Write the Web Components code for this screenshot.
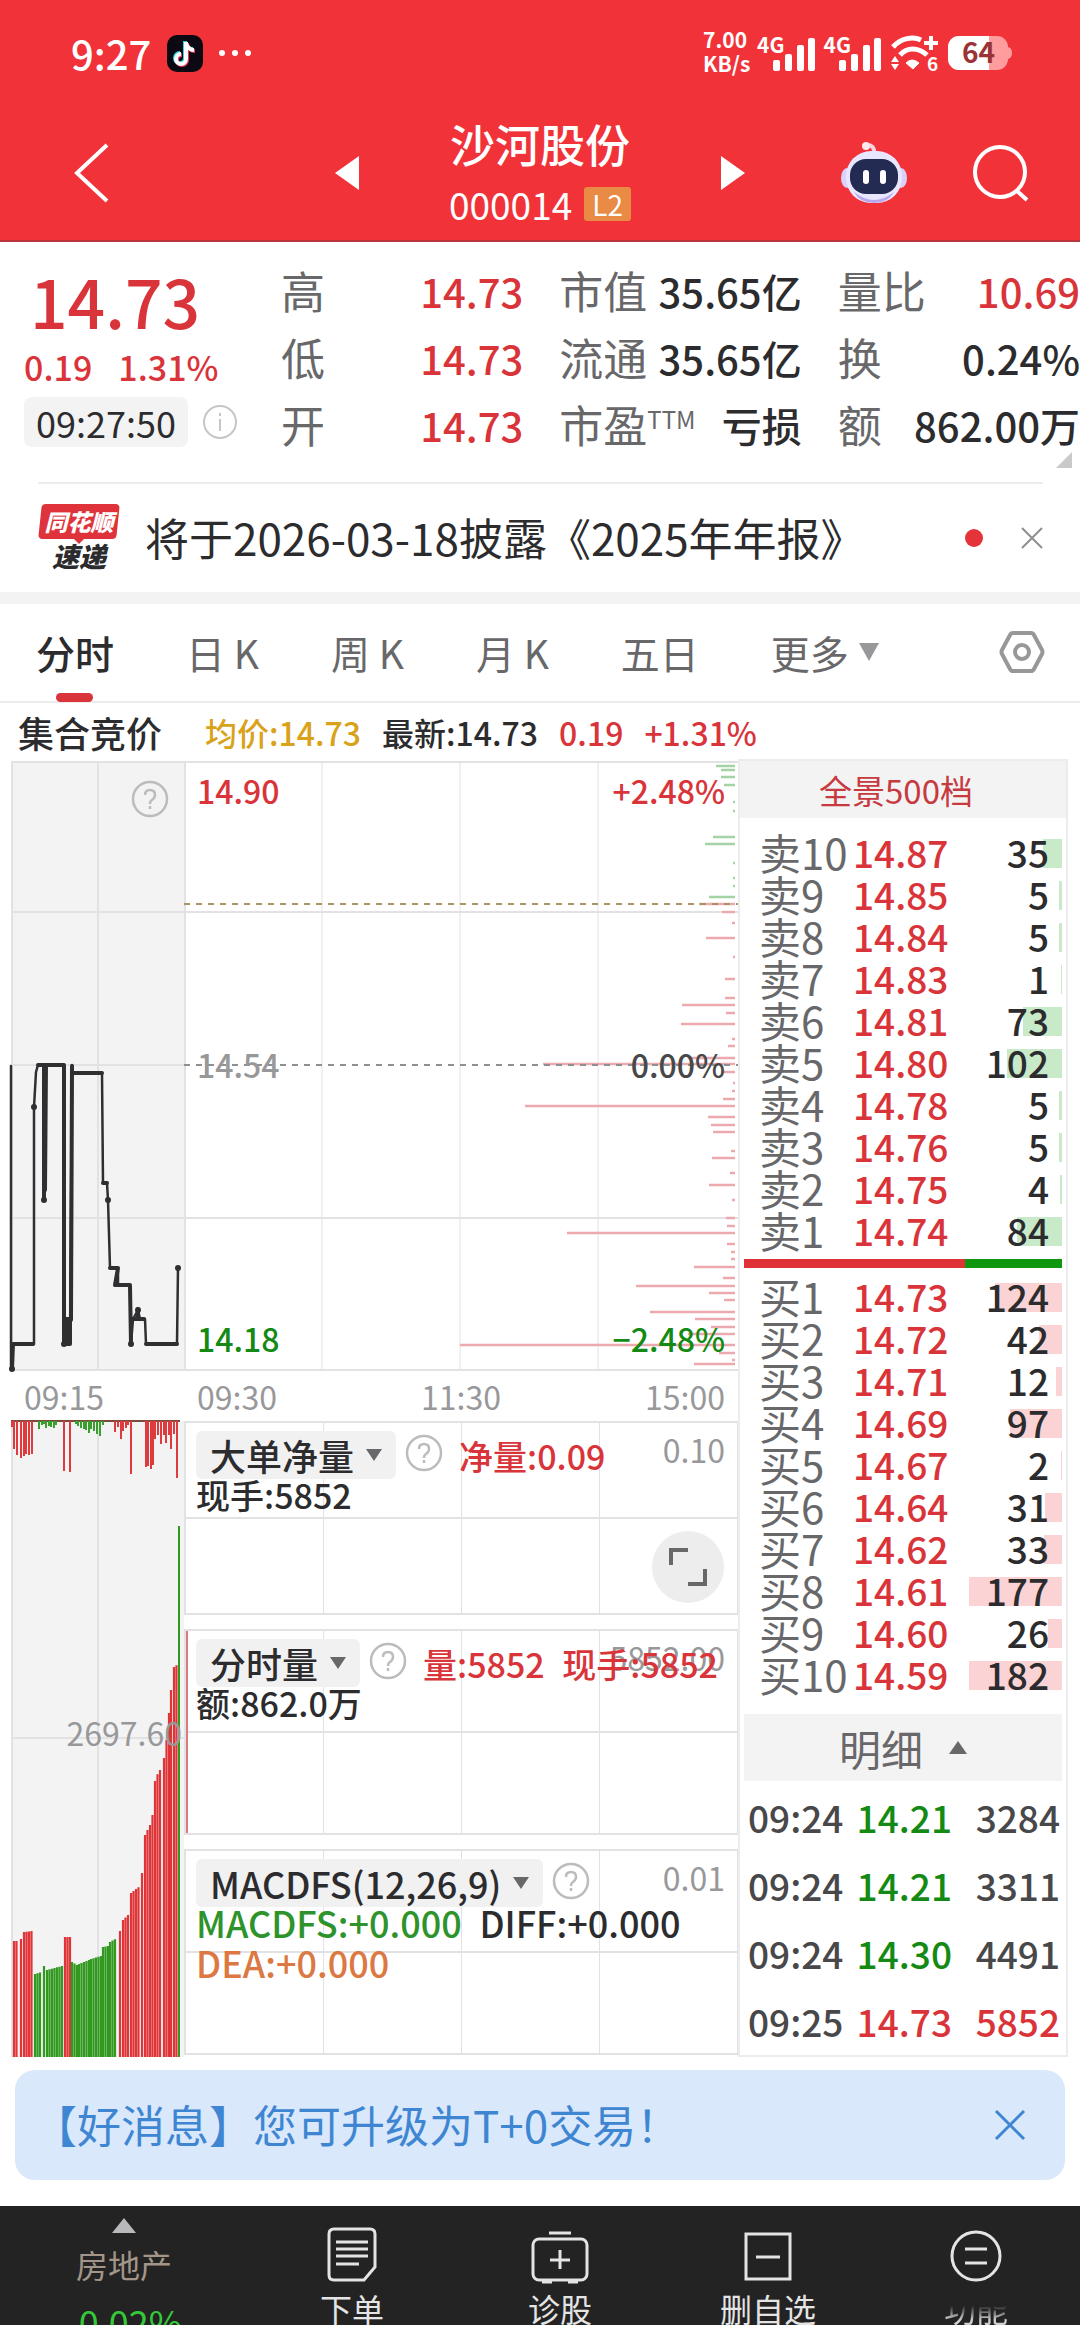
<!DOCTYPE html>
<html lang="zh-CN">
<head>
<meta charset="utf-8">
<meta name="viewport" content="width=device-width, initial-scale=1">
<title>沙河股份 000014</title>
<style>
    body {
        margin: 0;
        background: #ffffff;
        color: #2c2c2e;
        font-family: "Noto Sans CJK SC", "Liberation Sans", sans-serif;
        --red: #d9343a;
        --green: #148a14;
        --grid: #e2e2e4;
        --shade: #f3f3f4;
        --muted: #98989a;
    }

    main {
        display: grid;
        grid-template-columns: 727fr 330fr;
        padding: 0 12px 0 11px;
    }
</style>
</head>
<body>
    <status-bar></status-bar>
    <stock-header name="沙河股份" code="000014"></stock-header>
    <quote-panel></quote-panel>
    <news-strip>将于2026-03-18披露《2025年年报》</news-strip>
    <period-tabs></period-tabs>
    <price-legend></price-legend>
    <main>
        <chart-board></chart-board>
        <order-column></order-column>
    </main>
    <upgrade-banner>【好消息】您可升级为T+0交易！</upgrade-banner>
    <bottom-nav></bottom-nav>

<script>
const BASE = `
    :host, * { box-sizing: border-box; }
    button { font: inherit; color: inherit; background: none; border: 0; padding: 0; margin: 0; cursor: pointer; }
    svg { display: block; flex: none; overflow: visible; }
    table { border-collapse: collapse; }
    td, th { padding: 0; font-weight: inherit; }
`;

class BaseElement extends HTMLElement {
    constructor() {
        super();
        this.attachShadow({ mode: "open" });
    }

    connectedCallback() {
        this.shadowRoot.innerHTML = `<style>${BASE}${this.css()}</style>${this.html()}`;
    }

    css() { return ""; }
    html() { return ""; }
}

class StatusBar extends BaseElement {
    css() {
        return `
            :host { display: flex; justify-content: space-between; align-items: center; height: 106px;
                padding: 0 68px 0 71px; background: #f13239; color: #fff; font-weight: 500; }
            .side { display: flex; align-items: center; }
            .left { gap: 16px; font-size: 40px; line-height: 48px; }
            .right { gap: 8px; }
            .speed { font-size: 21px; line-height: 24px; font-weight: 700; width: 46px; margin-bottom: 4px; }
            .sim { display: flex; align-items: flex-start; height: 36px; font-size: 21px; line-height: 18px; font-weight: 700; }
            .sim svg { margin-left: -13px; }
        `;
    }

    signal() {
        return `<span class="sim">4G<svg width="44" height="36" viewBox="0 0 44 36" fill="#fff">
            <rect x="1" y="25" width="7" height="11" rx="2"/><rect x="13" y="19" width="7" height="17" rx="2"/>
            <rect x="25" y="10" width="7" height="26" rx="2"/><rect x="36" y="3" width="7" height="33" rx="2"/></svg></span>`;
    }

    html() {
        return `
            <div class="side left"><span>9:27</span>
                <svg width="36" height="37" viewBox="0 0 36 37"><rect width="36" height="37" rx="10" fill="#0b0a12"/>
                    <g fill="none" stroke-width="4"><path d="M19 7v17a5 5 0 1 1-5-5M19 8c1 4 4 7 8 7" stroke="#27d9de" transform="translate(-1 -1)"/>
                    <path d="M19 7v17a5 5 0 1 1-5-5M19 8c1 4 4 7 8 7" stroke="#e8345b" transform="translate(1 1)"/>
                    <path d="M19 7v17a5 5 0 1 1-5-5M19 8c1 4 4 7 8 7" stroke="#fff"/></g></svg>
                <svg width="32" height="6" fill="#fff"><circle cx="3" cy="3" r="3"/><circle cx="16" cy="3" r="3"/><circle cx="29" cy="3" r="3"/></svg>
            </div>
            <div class="side right">
                <span class="speed">7.00<br>KB/s</span>
                ${this.signal()}${this.signal()}
                <svg width="50" height="36" viewBox="0 0 50 36" fill="none" stroke="#fff" stroke-width="5">
                    <path d="M3 12c8-9 20-11 28-7M10 20c7-8 18-8 27 0"/><path d="M16 28q6-6 13 0l-6 6z" fill="#fff" stroke-width="1"/>
                    <path d="M41 1v14M34 8h14" stroke-width="4"/><path d="M1 27l4-6 4 6zM1 29l4 6 4-6z" fill="#fff" stroke="none"/>
                    <text x="37" y="36" font-size="19" font-weight="700" fill="#fff" stroke="none">6</text></svg>
                <svg width="64" height="34" viewBox="0 0 64 34"><rect width="60" height="34" rx="11" fill="#ff9c9e"/>
                    <path d="M11 0h30v34H11A11 11 0 0 1 0 23V11A11 11 0 0 1 11 0z" fill="#fff"/><path d="M60 11q4 1 4 6t-4 6z" fill="#ff9c9e"/>
                    <text x="14" y="27" font-size="28" font-weight="700" fill="#9b3238">64</text></svg>
            </div>`;
    }
}

class StockHeader extends BaseElement {
    css() {
        return `
            :host { display: grid; grid-template-columns: 335px 1fr 335px; align-items: center; height: 136px;
                background: #f13239; color: #fff; border-bottom: 2px solid #b8353c; }
            .back { justify-self: start; margin-left: 74px; }
            .middle { display: flex; justify-content: space-between; align-items: center; }
            .title { text-align: center; }
            h1 { margin: 0 0 2px; font-size: 45px; line-height: 60px; font-weight: 500; }
            .code { display: flex; align-items: center; justify-content: center; gap: 12px; font-size: 37px; line-height: 56px; }
            .badge { background: #e98a45; font-size: 28px; line-height: 34px; padding: 0 8px; border-radius: 3px; }
            .tools { display: flex; align-items: center; justify-content: flex-end; gap: 66px; padding-right: 51px; }
        `;
    }

    html() {
        return `
            <button class="back" aria-label="返回"><svg width="36" height="60" viewBox="0 0 36 60" fill="none" stroke="#fff" stroke-width="4"><path d="M33 2L3 30l30 28"/></svg></button>
            <div class="middle">
                <button aria-label="上一只"><svg width="24" height="34" fill="#fff"><path d="M24 0v34L0 17z"/></svg></button>
                <div class="title"><h1>${this.getAttribute("name")}</h1>
                    <div class="code">${this.getAttribute("code")}<span class="badge">L2</span></div></div>
                <button aria-label="下一只"><svg width="24" height="34" fill="#fff"><path d="M0 0v34l24-17z"/></svg></button>
            </div>
            <div class="tools">
                <button aria-label="智能助手"><svg width="66" height="62" viewBox="0 0 66 62">
                    <path d="M33 12q1-9-7-9" fill="none" stroke="#f6d4e4" stroke-width="4"/><circle cx="25" cy="4" r="4" fill="#ffe9ee"/>
                    <ellipse cx="6" cy="36" rx="6" ry="10" fill="#d8d2fa"/><ellipse cx="60" cy="36" rx="6" ry="10" fill="#d8d2fa"/>
                    <rect x="5" y="9" width="56" height="52" rx="25" fill="#e9e6ff"/><path d="M13 50q20 16 40 0-6 11-20 11t-20-11z" fill="#b9a8ee"/>
                    <rect x="9" y="17" width="48" height="35" rx="16" fill="#232b52"/>
                    <rect x="22" y="28" width="6" height="14" rx="3" fill="#fff"/><rect x="39" y="28" width="6" height="14" rx="3" fill="#fff"/></svg></button>
                <button aria-label="搜索"><svg width="56" height="56" viewBox="0 0 56 56" fill="none" stroke="#fff" stroke-width="4"><circle cx="27" cy="27" r="25"/><path d="M44 46l10 9"/></svg></button>
            </div>`;
    }
}

class QuotePanel extends BaseElement {
    css() {
        return `
            :host { display: flex; height: 240px; padding: 17px 0 0 24px; position: relative; }
            .now { width: 257px; color: var(--red); }
            .last { font-size: 66px; line-height: 82px; font-weight: 500; padding-left: 6px; }
            .change { display: flex; gap: 26px; font-size: 34px; line-height: 52px; margin-bottom: 4px; font-weight: 500; }
            .stamp { display: flex; align-items: center; gap: 14px; color: #2c2c2e; }
            time { background: #f3f3f4; border-radius: 8px; font-size: 36px; line-height: 50px; width: 164px; text-align: center; }
            dl { flex: 1; display: grid; grid-template-columns: repeat(3, 1fr); column-gap: 36px; grid-auto-rows: 67px; margin: 0; }
            dl div { display: flex; justify-content: space-between; white-space: nowrap; }
            dt { color: #68686a; font-size: 44px; line-height: 62px; }
            dd { margin: 0; font-size: 40px; line-height: 64px; font-weight: 500; }
            .up { color: var(--red); }
            sup { font-size: 24px; line-height: 24px; vertical-align: 14px; }
            .fold { position: absolute; right: 8px; bottom: 14px; }
        `;
    }

    html() {
        const rows = [
            ["高", "14.73", "up"], ["市值", "35.65亿"], ["量比", "10.69", "up"],
            ["低", "14.73", "up"], ["流通", "35.65亿"], ["换", "0.24%"],
            ["开", "14.73", "up"], ["市盈<sup>TTM</sup>", "亏损"], ["额", "862.00万"]
        ];
        return `
            <div class="now">
                <div class="last">14.73</div>
                <div class="change"><span>0.19</span><span>1.31%</span></div>
                <div class="stamp"><time>09:27:50</time>
                    <svg width="36" height="36" fill="none" stroke="#c6c6c8" stroke-width="2"><circle cx="18" cy="18" r="16"/><path d="M18 15v12M18 9v3"/></svg></div>
            </div>
            <dl>${rows.map(r => `<div><dt>${r[0]}</dt><dd class="${r[2] || ""}">${r[1]}</dd></div>`).join("")}</dl>
            <svg class="fold" width="16" height="16" fill="#c9c9cb"><path d="M16 0v16H0z"/></svg>`;
    }
}

class NewsStrip extends BaseElement {
    css() {
        return `
            :host { display: block; border-bottom: 12px solid var(--shade); }
            .row { display: flex; align-items: center; height: 110px; margin: 0 37px 0 38px; border-top: 2px solid #ececee; }
            .logo { width: 82px; text-align: center; font-weight: 900; font-style: italic; margin-right: 25px; }
            .logo b { display: block; position: relative; z-index: 0; color: #fff; font-size: 23px; line-height: 35px; }
            .logo b::before { content: ""; position: absolute; z-index: -1; inset: 0 2px; background: #df333b; border-radius: 4px; transform: skewX(-6deg); }
            .logo b::after { content: ""; position: absolute; left: 36px; top: 100%; border: 5px solid transparent; border-top-color: #df333b; }
            .logo span { display: flex; justify-content: center; gap: 5px; font-size: 27px; line-height: 34px; }
            p { margin: 0; flex: 1; font-size: 44px; line-height: 58px; padding-bottom: 2px; white-space: nowrap; }
            .dot { width: 18px; height: 18px; border-radius: 50%; background: #e5333a; margin-right: 38px; }
        `;
    }

    html() {
        return `<div class="row">
            <div class="logo"><b>同花顺</b><span>速递</span></div>
            <p><slot></slot></p><span class="dot"></span>
            <button aria-label="关闭"><svg width="22" height="22" stroke="#8f8f91" stroke-width="2"><path d="M1 1l20 20M21 1L1 21"/></svg></button>
        </div>`;
    }
}

class PeriodTabs extends BaseElement {
    css() {
        return `
            :host { display: block; border-bottom: 2px solid #ececee; }
            nav { display: flex; align-items: center; gap: 72px; height: 97px; padding: 0 35px 0 36px; color: #68686a; }
            button { display: flex; align-items: center; gap: 10px; height: 97px; padding-bottom: 2px; font-size: 39px; white-space: pre; position: relative; }
            .on { color: #2c2c2e; font-weight: 500; }
            .on::after { content: ""; position: absolute; left: 20px; bottom: -1px; width: 37px; height: 9px; border-radius: 5px; background: #d9343a; }
            .setup { margin-left: auto; }
        `;
    }

    html() {
        const tabs = ["分时", "日 K", "周 K", "月 K", "五日"];
        return `<nav>${tabs.map((t, i) => `<button class="${i === 0 ? "on" : ""}">${t}</button>`).join("")}
            <button>更多<svg width="20" height="18" fill="#98989a"><path d="M0 0h20L10 18z"/></svg></button>
            <button class="setup" aria-label="设置"><svg width="46" height="44" viewBox="0 0 46 44" fill="none" stroke="#98989a" stroke-width="4"><path d="M14 3h18q2 0 3 2l8 15q1 2 0 4l-8 15q-1 2-3 2H14q-2 0-3-2L3 24q-1-2 0-4l8-15q1-2 3-2z"/><circle cx="23" cy="22" r="7"/></svg></button>
        </nav>`;
    }
}

class PriceLegend extends BaseElement {
    css() {
        return `
            :host { display: flex; align-items: center; gap: 21px; height: 58px; padding: 0 18px; font-size: 32px; font-weight: 500; }
            b { font-size: 36px; font-weight: 500; margin-right: 22px; }
            .avg { color: #d9a21b; }
            .up { color: var(--red); }
        `;
    }

    html() {
        return `<b>集合竞价</b><span class="avg">均价:14.73</span><span>最新:14.73</span><span class="up">0.19</span><span class="up">+1.31%</span>`;
    }
}

class HelpButton extends BaseElement {
    css() { return `:host { display: block; }`; }

    html() {
        return `<button aria-label="说明"><svg width="38" height="38" viewBox="0 0 38 38" fill="none" stroke="#bcbcbe" stroke-width="2.5">
            <circle cx="19" cy="19" r="17"/><path d="M14 15q0-5 5-5t5 5q0 3-3 5-2 1-2 4M19 26v3"/></svg></button>`;
    }
}

// one sub-chart: grid lines, a selector, its legend and the scale maximum
class IndicatorPane extends BaseElement {
    css() {
        return `
            :host { display: block; position: relative; border: solid var(--grid); border-width: 2px 0 2px 2px;
                background: linear-gradient(var(--grid), var(--grid)) 0 50% / 100% 2px no-repeat,
                    repeating-linear-gradient(to right, transparent 0 calc(25% - 1px), var(--grid) calc(25% - 1px) 25%); }
            .legend { position: relative; padding: 8px 0 0 10px; font-size: 34px; line-height: 39px; font-weight: 500; }
            .head { display: flex; align-items: center; gap: 9px; height: 48px; margin-bottom: -4px; white-space: nowrap; }
            .head > button { display: flex; align-items: center; gap: 12px; height: 48px; padding: 0 14px; border-radius: 6px;
                background: #f1f1f2; font-size: 36px; }
            .scale { position: absolute; right: 13px; top: 9px; font-size: 32px; line-height: 34px; color: var(--muted); }
            ::slotted(*) { margin-right: 10px; }
            .values { display: flex; padding-left: 7px; }
        `;
    }

    html() {
        return `<span class="scale">${this.getAttribute("scale")}</span>
            <div class="legend">
                <div class="head">
                    <button>${this.getAttribute("label")}<svg width="16" height="12" fill="#68686a"><path d="M0 0h16L8 12z"/></svg></button>
                    <help-button></help-button>
                    <div class="values"><slot name="value"></slot></div>
                </div>
                <slot></slot>
            </div>
            <slot name="over"></slot>`;
    }
}

class ChartBoard extends BaseElement {
    css() {
        return `
            :host { display: grid; grid-template-columns: 173fr 554fr; grid-template-rows: 610px 50px 636px; min-width: 0; }
            .pane { display: grid; min-width: 0; }
            .pane > * { grid-area: 1 / 1; }
            .pane > svg { width: 100%; height: 100%; }
            .help { justify-self: end; margin: 19px 15px 0 0; }
            .labels { display: flex; flex-direction: column; justify-content: space-between; padding: 12px 13px 16px; font-size: 32px; line-height: 34px; font-weight: 500; z-index: 1; }
            .labels div, .times { display: flex; justify-content: space-between; }
            .times { align-items: center; padding: 0 13px; font-size: 32px; color: var(--muted); }
            .up { color: var(--red); }
            .down { color: var(--green); }
            .mid { color: var(--muted); }
            .mid span + span { color: #48484a; }
            .half { align-self: start; justify-self: end; margin: 291px 2px 0 0; font-size: 32px; line-height: 40px; color: var(--muted); }
            .stack { display: grid; grid-template-rows: 194px 206px 206px; gap: 14px; }
            .volume { box-shadow: inset 2px 0 0 #d97a7d; }
            .maximise { position: absolute; right: 14px; bottom: 10px; width: 72px; height: 72px; border-radius: 50%; background: #ededee; display: grid; place-items: center; }
            .macd { font-size: 36px; }
            .green { color: #2f932c; }
            .orange { color: #dc7843; }
        `;
    }

    // resting orders hang from the right edge: [y, left x]
    depth() {
        const sell = [[766, 716], [770, 721], [777, 721], [785, 724], [802, 733], [811, 733], [837, 713], [844, 705], [863, 733], [878, 733], [886, 733], [897, 709]];
        const buy = [[904, 699], [912, 722], [923, 732], [938, 706], [957, 733], [979, 725], [998, 725], [1005, 682], [1013, 726], [1024, 681],
            [1039, 732], [1046, 728], [1058, 688], [1064, 543], [1072, 721], [1083, 733], [1091, 732], [1099, 723], [1106, 525], [1117, 708],
            [1125, 711], [1132, 713], [1151, 731], [1158, 712], [1173, 730], [1185, 709], [1200, 732], [1218, 726], [1226, 727], [1233, 567],
            [1244, 727], [1252, 731], [1259, 731], [1267, 694], [1278, 723], [1286, 636], [1293, 709], [1300, 724], [1312, 650], [1319, 695],
            [1327, 711], [1334, 688], [1345, 460], [1353, 719], [1360, 732], [1364, 694]];
        const draw = (list, color) => `<path stroke="${color}" stroke-width="2.5" d="${list.map(([y, x]) => `M${x} ${y}H735`).join("")}"/>`;
        return draw(sell, "#a5d3a6") + draw(buy, "#ecaaae");
    }

    // net inflow bars hang from the top line: [x, height]
    net() {
        const red = [[12, 6], [14, 28], [17, 34], [21, 37], [24, 35], [26, 33], [29, 34], [32, 33], [64, 50], [70, 51], [115, 11], [118, 6],
            [121, 18], [123, 10], [126, 7], [128, 4], [131, 53], [146, 46], [148, 45], [151, 48], [153, 44], [155, 18], [158, 14], [161, 23], [164, 14],
            [166, 22], [169, 14], [171, 28], [174, 13], [177, 57]];
        const green = [[39, 8], [42, 4], [44, 3], [46, 7], [49, 5], [51, 6], [54, 7], [56, 4], [76, 3], [78, 5], [81, 7], [84, 8], [86, 9],
            [89, 12], [91, 8], [94, 10], [97, 13], [100, 15], [103, 4]];
        const draw = (list, color) => `<path stroke="${color}" stroke-width="2" d="${list.map(([x, h]) => `M${x} 1421v${h}`).join("")}"/>`;
        return `<path stroke="#7b4a3a" stroke-width="2" d="M11 1421H180"/>` + draw(red, "#de3b3f") + draw(green, "#3aa02d");
    }

    // matched volume, drawn from the bottom: [first x, last x, y at first, y at last, colour]
    volume() {
        const R = "#df3438", G = "#31991f";
        const runs = [[14, 17, 1941, 1941, R], [21, 21, 1939, 1939, R], [24, 32, 1932, 1931, R], [35, 42, 1974, 1972, G], [44, 44, 1966, 1966, G],
            [47, 62, 1970, 1966, G], [65, 70, 1937, 1937, R], [72, 77, 1962, 1965, G], [79, 89, 1964, 1960, G], [91, 101, 1959, 1956, G],
            [103, 108, 1947, 1946, G], [110, 117, 1942, 1938, G], [120, 122, 1931, 1921, R], [123, 129, 1920, 1914, R], [131, 140, 1893, 1886, R],
            [142, 144, 1873, 1863, R], [145, 148, 1835, 1829, R], [150, 153, 1825, 1813, R], [155, 158, 1781, 1773, R], [160, 162, 1770, 1765, R],
            [164, 167, 1758, 1736, R], [169, 169, 1713, 1713, R], [171, 172, 1690, 1680, R], [174, 177, 1667, 1665, R]];
        return runs.map(([a, b, y0, y1, color]) => {
            let d = "";
            for (let x = a; x <= b; x += 2.5) {
                const y = b === a ? y0 : y0 + (y1 - y0) * (x - a) / (b - a);
                d += `M${x} 2057V${y}`;
            }
            return `<path stroke="${color}" stroke-width="2.2" d="${d}"/>`;
        }).join("") + `<path stroke="#31991f" stroke-width="2" d="M179 1526V2057"/>`;
    }

    html() {
        return `
            <div class="pane">
                <svg viewBox="11 761 173 610" preserveAspectRatio="none">
                    <rect x="11" y="761" width="173" height="610" fill="#f3f3f4"/>
                    <path stroke="#e2e2e4" stroke-width="2" fill="none" d="M12 761V1370H184M11 762H184M98 762V1370M11 912H184M11 1065H184M11 1218H184"/>
                    <g fill="none" stroke="#2f2f31" stroke-linejoin="round" stroke-linecap="round">
                        <path stroke-width="2.5" d="M11 1066V1369L13 1344H34V1107L36 1072L38 1065H64V1344L67 1319L70 1344L72 1065L73 1073H102L103 1183H107L108 1200L110 1268H118V1285H130L131 1344L133 1319L138 1310L140 1319H145L146 1344H177L178 1268"/>
                        <path stroke-width="4" d="M12 1369L13 1344H33M38 1065H64M44 1065V1200M46 1065L45 1190M64 1066V1344H70V1319H66V1344M71 1320L72 1066M73 1073H102M103 1183H107M110 1268H118L115 1285H130M130 1286L131 1344M132 1319H144M138 1309V1319M146 1344H177"/>
                        <path stroke-width="6" d="M12 1369h0M34 1107h0M44 1200h0M64 1344h0M108 1200h0M131 1344h0M138 1310h0M178 1268h0"/>
                    </g>
                </svg>
                <help-button class="help"></help-button>
            </div>
            <div class="pane">
                <svg viewBox="184 761 554 610" preserveAspectRatio="none" fill="none">
                    <path stroke="#e2e2e4" stroke-width="2" d="M184 762H738M185 761V1371M184 1370H738M184 912H738M184 1218H738"/>
                    <path stroke="#e2e2e4" d="M322 762V1370M460 762V1370M598 762V1370"/>
                    ${this.depth()}
                    <path stroke="#a89465" stroke-width="2" stroke-dasharray="6 6" d="M184 904H738"/>
                    <path stroke="#8f8f91" stroke-width="2" stroke-dasharray="6 6" d="M184 1065H738"/>
                </svg>
                <div class="labels">
                    <div class="up"><span>14.90</span><span>+2.48%</span></div>
                    <div class="mid"><span>14.54</span><span>0.00%</span></div>
                    <div class="down"><span>14.18</span><span>−2.48%</span></div>
                </div>
            </div>
            <div class="times"><span>09:15</span></div>
            <div class="times"><span>09:30</span><span>11:30</span><span>15:00</span></div>
            <div class="pane">
                <svg viewBox="11 1421 173 636" preserveAspectRatio="none">
                    <rect x="11" y="1421" width="173" height="636" fill="#f3f3f4"/>
                    <path stroke="#e2e2e4" stroke-width="2" d="M12 1421V2057M98 1421V2057M11 1738H184"/>
                    ${this.net()}${this.volume()}
                </svg>
                <span class="half">2697.60</span>
            </div>
            <div class="stack">
                <indicator-pane label="大单净量" scale="0.10">
                    <span slot="value" class="up">净量:0.09</span>
                    <span>现手:5852</span>
                    <button slot="over" class="maximise" aria-label="全屏"><svg width="40" height="40" fill="none" stroke="#68686a" stroke-width="4"><path d="M3 18V3h17M37 22v15H20"/></svg></button>
                </indicator-pane>
                <indicator-pane class="volume" label="分时量" scale="5852.00">
                    <span slot="value" class="up">量:5852</span>
                    <span slot="value" class="up">&nbsp;现手:5852</span>
                    <span>额:862.0万</span>
                </indicator-pane>
                <indicator-pane label="MACDFS(12,26,9)" scale="0.01">
                    <span class="macd green">MACDFS:+0.000</span> <span class="macd">DIFF:+0.000</span><br>
                    <span class="macd orange">DEA:+0.000</span>
                </indicator-pane>
            </div>`;
    }
}

class OrderTable extends BaseElement {
    css() {
        return `
            :host { display: block; }
            table { width: 100%; line-height: 40px; white-space: nowrap; }
            tr { height: 42px; }
            th { text-align: left; color: #68686a; font-size: 42px; width: 94px; }
            .price { color: var(--red); font-weight: 500; font-size: 37px; }
            .qty { text-align: right; font-weight: 500; font-size: 37px; padding-right: 13px;
                background: linear-gradient(var(--bar), var(--bar)) right 60% / var(--w) 29px no-repeat; }
            :host([side="卖"]) { --bar: #c8eac9; }
            :host([side="买"]) { --bar: #fbd3d5; }
        `;
    }

    html() {
        const side = this.getAttribute("side");
        const rows = this.textContent.trim().split(/\s+/).map(r => r.split("/"));
        return `<table>${rows.map(([n, price, qty]) => {
            const w = Math.max(1, Math.round(qty * 0.54));
            return `<tr><th scope="row">${side}${n}</th><td class="price">${price}</td><td class="qty" style="--w:${w}px">${qty}</td></tr>`;
        }).join("")}</table>`;
    }
}

class TradeList extends BaseElement {
    css() {
        return `
            :host { display: block; }
            .toggle { display: flex; width: 100%; align-items: center; justify-content: center; gap: 26px; height: 67px;
                background: #f3f3f4; color: #68686a; font-size: 42px; line-height: 60px; }
            table { width: 100%; margin-top: 2px; font-size: 37px; font-weight: 500; color: #48484a; }
            td { height: 68px; line-height: 68px; padding-left: 4px; }
            td:nth-child(2) { width: 115px; }
            td:last-child { text-align: right; padding: 0 2px 0 0; }
            .down { color: var(--green); }
            .up { color: var(--red); }
        `;
    }

    html() {
        const trades = [["09:24", "14.21", "3284", "down", ""], ["09:24", "14.21", "3311", "down", ""],
            ["09:24", "14.30", "4491", "down", ""], ["09:25", "14.73", "5852", "up", "up"]];
        return `<button class="toggle">明细<svg width="18" height="13" fill="#68686a"><path d="M0 13h18L9 0z"/></svg></button>
            <table>${trades.map(t => `<tr><td>${t[0]}</td><td class="${t[3]}">${t[1]}</td><td class="${t[4]}">${t[2]}</td></tr>`).join("")}</table>`;
    }
}

class OrderColumn extends BaseElement {
    css() {
        return `
            :host { display: block; min-width: 0; border: 2px solid #ececee; margin-top: -2px; }
            .all { display: block; width: 100%; height: 57px; padding-right: 14px; background: #f3f3f4; color: #c73a3f; font-size: 33px; line-height: 54px; }
            order-table { margin: 0 4px 0 19px; }
            .sell { margin-top: 13px; }
            .ratio { display: flex; height: 9px; margin: 8px 4px 7px; }
            .ratio i { flex: 97; background: #0f960f; }
            .ratio i:first-child { flex: 221; background: #de3236; }
            trade-list { margin: 19px 4px 0; }
        `;
    }

    html() {
        return `
            <button class="all">全景500档</button>
            <order-table class="sell" side="卖">10/14.87/35 9/14.85/5 8/14.84/5 7/14.83/1 6/14.81/73 5/14.80/102 4/14.78/5 3/14.76/5 2/14.75/4 1/14.74/84</order-table>
            <div class="ratio"><i></i><i></i></div>
            <order-table side="买">1/14.73/124 2/14.72/42 3/14.71/12 4/14.69/97 5/14.67/2 6/14.64/31 7/14.62/33 8/14.61/177 9/14.60/26 10/14.59/182</order-table>
            <trade-list></trade-list>`;
    }
}

class UpgradeBanner extends BaseElement {
    css() {
        return `
            :host { display: flex; align-items: center; justify-content: space-between; height: 110px; margin: 13px 15px 26px; padding: 0 40px 0 18px;
                border-radius: 20px; background: #dae8fb; color: #3f86d2; font-size: 44px; line-height: 58px; white-space: nowrap; }
            p { margin: 0; padding-bottom: 2px; }
        `;
    }

    html() {
        return `<p><slot></slot></p><button aria-label="关闭"><svg width="30" height="30" stroke="#3f86d2" stroke-width="3"><path d="M1 1l28 28M29 1L1 29"/></svg></button>`;
    }
}

class BottomNav extends BaseElement {
    css() {
        return `
            :host { display: grid; grid-template-columns: 248px repeat(4, 1fr); height: 119px; overflow: hidden; background: #232324; color: #e4e4e5; font-size: 32px; }
            button { display: flex; flex-direction: column; align-items: center; justify-content: flex-start; padding-top: 20px; height: 150px; }
            button span { line-height: 48px; }
            .sector { padding-top: 12px; color: #a39688; }
            .sector svg { margin-bottom: 7px; }
            .sector em { font-style: normal; font-size: 36px; line-height: 60px; padding-top: 3px; color: #35c93a; }
            .faded span { background: linear-gradient(#232324 45%, #d0d0d2 75%); -webkit-background-clip: text; background-clip: text; color: transparent; }
        `;
    }

    html() {
        const icon = d => `<svg width="60" height="58" viewBox="0 0 60 58" fill="none" stroke="#e4e4e5" stroke-width="3">${d}</svg>`;
        return `
            <button class="sector"><svg width="24" height="15" fill="#b9b9bb"><path d="M0 15h24L12 0z"/></svg><span>房地产</span><em>-0.02%</em></button>
            <button>${icon('<path d="M12 3h36q5 0 5 5v33L42 54H12q-5 0-5-5V8q0-5 5-5zM14 16h32M14 23h32M14 30h32M14 38h23"/>')}<span>下单</span></button>
            <button>${icon('<rect x="3" y="13" width="54" height="41" rx="6"/><path d="M19 7h22M30 24v19M20 34h20M12 56h10M38 56h10"/>')}<span>诊股</span></button>
            <button>${icon('<path d="M8 8h44v45H8zM18 31h24"/>')}<span>删自选</span></button>
            <button class="faded">${icon('<circle cx="30" cy="30" r="24"/><path d="M19 23h22M19 37h22"/>')}<span>功能</span></button>`;
    }
}

customElements.define("status-bar", StatusBar);
customElements.define("stock-header", StockHeader);
customElements.define("quote-panel", QuotePanel);
customElements.define("news-strip", NewsStrip);
customElements.define("period-tabs", PeriodTabs);
customElements.define("price-legend", PriceLegend);
customElements.define("help-button", HelpButton);
customElements.define("indicator-pane", IndicatorPane);
customElements.define("chart-board", ChartBoard);
customElements.define("order-table", OrderTable);
customElements.define("trade-list", TradeList);
customElements.define("order-column", OrderColumn);
customElements.define("upgrade-banner", UpgradeBanner);
customElements.define("bottom-nav", BottomNav);
</script>
</body>
</html>
